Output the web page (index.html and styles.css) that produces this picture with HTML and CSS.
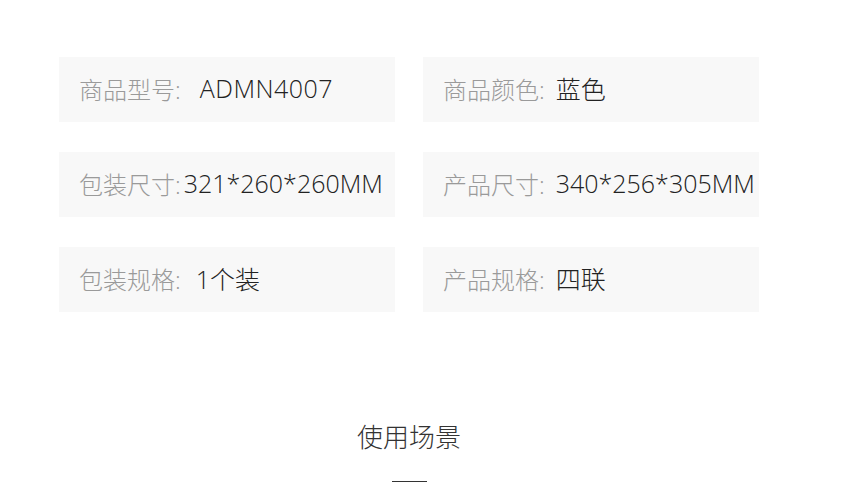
FILE: index.html
```html
<!DOCTYPE html>
<html lang="zh-CN">
<head>
    <meta charset="UTF-8">
    <meta name="viewport" content="width=device-width, initial-scale=1.0">
    <title>商品参数</title>
    <link rel="stylesheet" href="styles.css">
</head>
<body>
    <div class="wrap">
        <!-- 参数列表 -->
        <div class="spec-grid">
            <div class="spec-item"><span class="label">商品型号:</span><span class="value wide">ADMN4007</span></div>
            <div class="spec-item"><span class="label">商品颜色:</span><span class="value">蓝色</span></div>
            <div class="spec-item"><span class="label">包装尺寸:</span><span class="value tight">321*260*260MM</span></div>
            <div class="spec-item"><span class="label">产品尺寸:</span><span class="value">340*256*305MM</span></div>
            <div class="spec-item"><span class="label">包装规格:</span><span class="value mid">1个装</span></div>
            <div class="spec-item"><span class="label">产品规格:</span><span class="value">四联</span></div>
        </div>

        <!-- 使用场景 -->
        <div class="section-title">
            <h2>使用场景</h2>
            <div class="title-line"></div>
        </div>
    </div>
</body>
</html>
```

FILE: styles.css
```css
/* General Styling */
body {
    margin: 0;
    background-color: #fff;
    font-family: "Open Sans", "Noto Sans CJK SC", sans-serif;
    overflow: hidden;
}

.wrap {
    width: 700px;
    margin-left: 59px;
    padding-top: 57px;
}

/* Spec grid */
.spec-grid {
    display: grid;
    grid-template-columns: 336px 336px;
    column-gap: 28px;
    row-gap: 30px;
}

.spec-item {
    box-sizing: border-box;
    height: 65px;
    background-color: #f8f8f8;
    display: flex;
    align-items: center;
    padding: 0 0 3px 20px;
    font-size: 24px;
    font-weight: 300;
    white-space: nowrap;
}

.spec-item .label {
    color: #9a9a9a;
    padding-right: 3px;
}

.spec-item .value {
    color: #222;
    font-size: 25px;
    margin-left: 8px;
}

.spec-item .value.wide {
    margin-left: 16px;
    letter-spacing: 0.5px;
}

.spec-item .value.mid {
    margin-left: 12px;
}

.spec-item .value.tight {
    margin-left: 0;
}

/* Section title */
.section-title {
    margin-top: 110px;
    display: flex;
    flex-direction: column;
    align-items: center;
}

.section-title h2 {
    margin: 0;
    font-size: 26px;
    font-weight: 300;
    color: #333;
    line-height: 30px;
}

.title-line {
    width: 35px;
    height: 1px;
    background-color: #333;
    margin-top: 29px;
}
```
